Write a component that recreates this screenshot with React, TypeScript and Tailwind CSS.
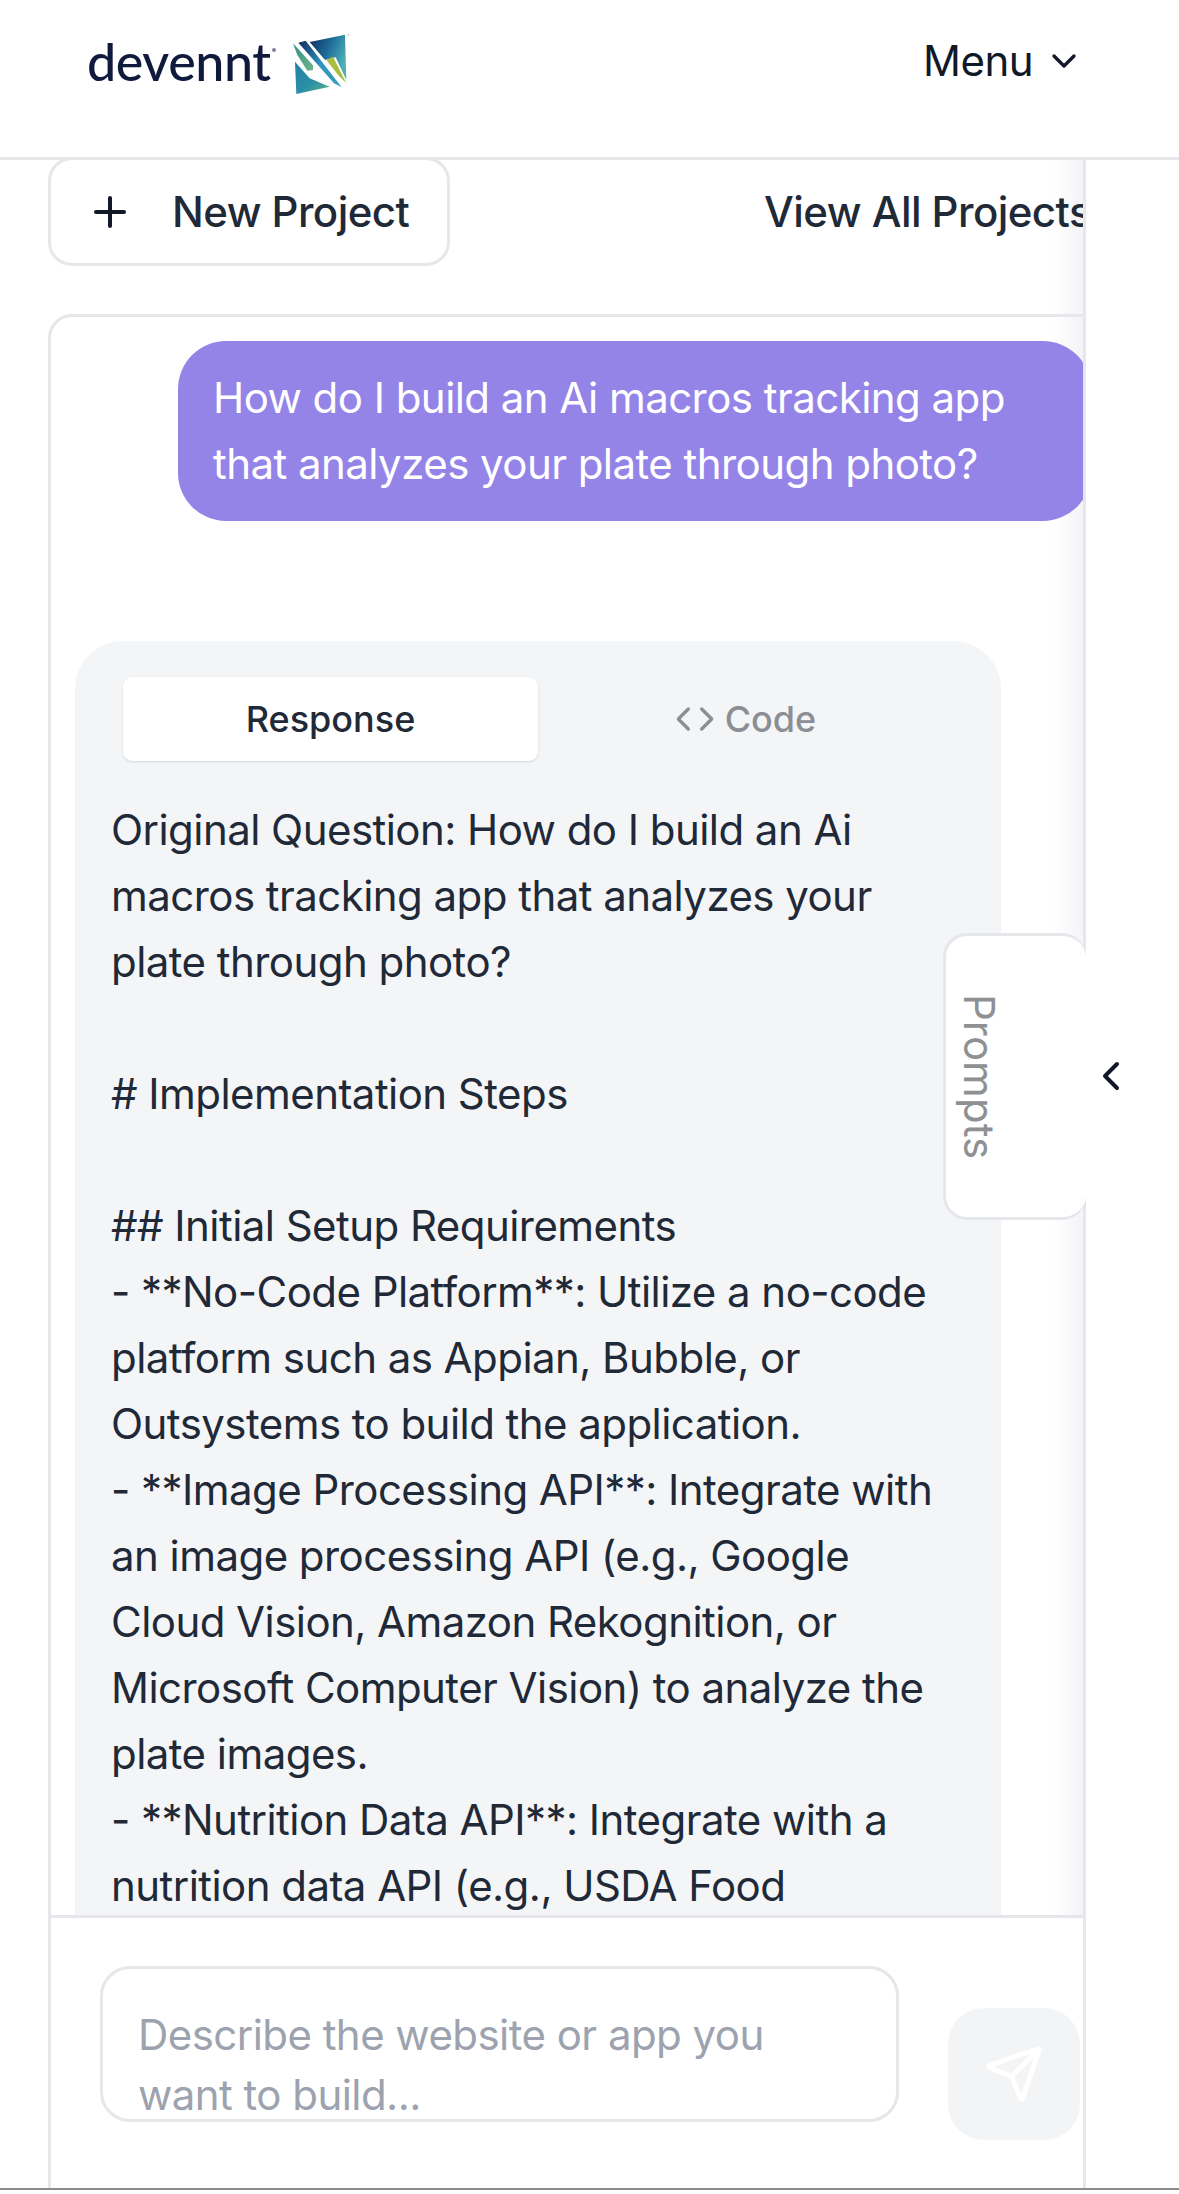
import { ChevronDown, ChevronLeft, Code, Plus, Send } from "lucide-react";

function Logo() {
  return (
    <svg width="66" height="68" viewBox="0 0 198 204" className="mt-[-3px] shrink-0">
      <defs>
        <linearGradient id="lgA" x1="0" y1="0" x2="1" y2="0.5">
          <stop offset="0" stopColor="#0e2a5c" />
          <stop offset="0.55" stopColor="#1f6f9c" />
          <stop offset="1" stopColor="#4fb0b5" />
        </linearGradient>
        <linearGradient id="lgB" x1="0" y1="0" x2="1" y2="1">
          <stop offset="0" stopColor="#0f2a5e" />
          <stop offset="0.5" stopColor="#2f93bd" />
          <stop offset="1" stopColor="#3a9fbd" />
        </linearGradient>
        <linearGradient id="lgC" x1="0" y1="0" x2="1" y2="1">
          <stop offset="0" stopColor="#1f7fa8" />
          <stop offset="0.55" stopColor="#2a8fa5" />
          <stop offset="1" stopColor="#5fb58e" />
        </linearGradient>
        <linearGradient id="lgD" x1="0" y1="0" x2="1" y2="1">
          <stop offset="0" stopColor="#2f8f8a" />
          <stop offset="1" stopColor="#6fb48a" />
        </linearGradient>
      </defs>
      <polygon points="62,36 168,14 172,150 140,82 108,90" fill="url(#lgA)" />
      <polygon points="28,38 50,32 158,172 135,160" fill="url(#lgB)" />
      <polygon points="12,40 72,106 72,120 55,122 25,75" fill="url(#lgD)" />
      <polygon points="112,90 132,80 172,160 150,138" fill="#a9bd3f" />
      <polygon points="18,95 62,145 122,170 22,192" fill="url(#lgC)" />
      <circle cx="178" cy="14" r="3" fill="#c4ccd4" />
    </svg>
  );
}

const body = `Original Question: How do I build an Ai macros tracking app that analyzes your plate through photo?

# Implementation Steps

## Initial Setup Requirements
- **No-Code Platform**: Utilize a no-code platform such as Appian, Bubble, or Outsystems to build the application.
- **Image Processing API**: Integrate with an image processing API (e.g., Google Cloud Vision, Amazon Rekognition, or Microsoft Computer Vision) to analyze the plate images.
- **Nutrition Data API**: Integrate with a nutrition data API (e.g., USDA Food Database) to fetch macros.`;

export default function App() {
  return (
    <div className="flex h-[2194px] w-[1179px] flex-col overflow-hidden bg-white font-['Inter',sans-serif] text-[42px] leading-[66px] tracking-[-0.55px] text-[#1f2937]">
      <header className="flex h-[160px] shrink-0 items-start justify-between border-b-[3px] border-[#e5e7eb] pl-[87px] pr-[95px]">
        <div className="mt-[33px] flex items-start gap-[18px]">
          <span className="relative mt-[-4px] font-['Lato',sans-serif] text-[52px] font-medium leading-[64px] tracking-[-0.4px] text-[#101a3d]">
            devennt
            <span className="absolute right-[-5px] top-[19px] h-[4px] w-[4px] rounded-full bg-[#7a8296]" />
          </span>
          <Logo />
        </div>
        <button className="mt-[28px] flex items-center gap-[11px] text-[42px] leading-[66px] text-[#111827]">
          Menu
          <ChevronDown className="h-[40px] w-[40px] text-[#111827]" strokeWidth={2} />
        </button>
      </header>

      <div className="relative flex min-h-0 flex-1">
        <div className="relative flex w-[1083px] shrink-0 flex-col overflow-hidden pl-[48px]">
          <div className="pointer-events-none absolute bottom-0 right-0 top-0 w-[30px] bg-gradient-to-r from-transparent to-[#f3f4f6]" />
          <div className="relative mt-[-3px] flex shrink-0 items-center justify-between">
            <button className="flex h-[109px] w-[402px] items-center gap-[38px] rounded-[24px] border-[3px] border-[#e5e7eb] bg-white pl-[35px] font-[450]">
              <Plus className="h-[48px] w-[48px] text-[#111827]" strokeWidth={2} />
              <span>New Project</span>
            </button>
            <span className="mr-[-8px] whitespace-nowrap font-[450]">View All Projects</span>
          </div>

          <div className="relative mt-[48px] flex min-h-0 flex-1 flex-col overflow-hidden rounded-tl-[24px] border-l-[3px] border-t-[3px] border-[#e5e7eb]">
            <div className="min-h-0 flex-1 overflow-hidden pl-[24px] pt-[24px]">
              <div className="ml-[103px] mr-[-8px] rounded-[48px] bg-[#9584e8] py-[24px] pl-[35px] pr-[60px] text-white">
                How do I build an Ai macros tracking app that analyzes your plate through photo?
              </div>
              <div className="mt-[120px] w-[926px] rounded-[48px] bg-[#f4f5f7] pt-[36px]">
                <div className="flex px-[48px]">
                  <div className="flex h-[84px] flex-1 items-center justify-center rounded-[9px] bg-white text-[36px] font-[450] tracking-normal shadow-sm">Response</div>
                  <div className="flex h-[84px] flex-1 items-center justify-center gap-[10px] text-[36px] font-[450] tracking-normal text-[#8b8e94]">
                    <Code className="h-[40px] w-[40px]" strokeWidth={2} />
                    Code
                  </div>
                </div>
                <div className="mt-[36px] whitespace-pre-wrap pb-[40px] pl-[36px] pr-[60px]">{body}</div>
              </div>
            </div>

            <div className="flex h-[273px] shrink-0 items-start border-t-[3px] border-[#e5e7eb] bg-white pl-[49px]">
              <div className="mt-[48px] h-[156px] w-[799px] overflow-hidden rounded-[30px] border-[3px] border-[#e5e7eb] pl-[35px] pr-[100px] pt-[36px] leading-[60px] text-[#9ca3af]">
                Describe the website or app you want to build...
              </div>
              <button className="ml-[49px] mt-[90px] flex h-[132px] w-[132px] shrink-0 items-center justify-center rounded-[36px] bg-[#f3f4f6]">
                <Send className="h-[60px] w-[60px] text-white" strokeWidth={2} />
              </button>
            </div>
          </div>
        </div>

        <aside className="flex flex-1 justify-center border-l-[3px] border-[#e5e7eb] pr-[44px] pt-[892px]">
          <ChevronLeft className="h-[48px] w-[48px] text-[#111827]" strokeWidth={2} />
        </aside>

        <div className="absolute left-[943px] top-[773px] flex h-[287px] w-[143px] items-start rounded-[24px] border-[3px] border-r-0 border-[#e5e7eb] bg-white pl-[5px] pt-[58px]">
          <span className="text-[42px] leading-[56px] tracking-normal text-[#8e9093] [writing-mode:vertical-rl]">Prompts</span>
        </div>
      </div>
      <div className="h-[6px] shrink-0 border-t-2 border-[#8c8c8c] bg-white" />
    </div>
  );
}
